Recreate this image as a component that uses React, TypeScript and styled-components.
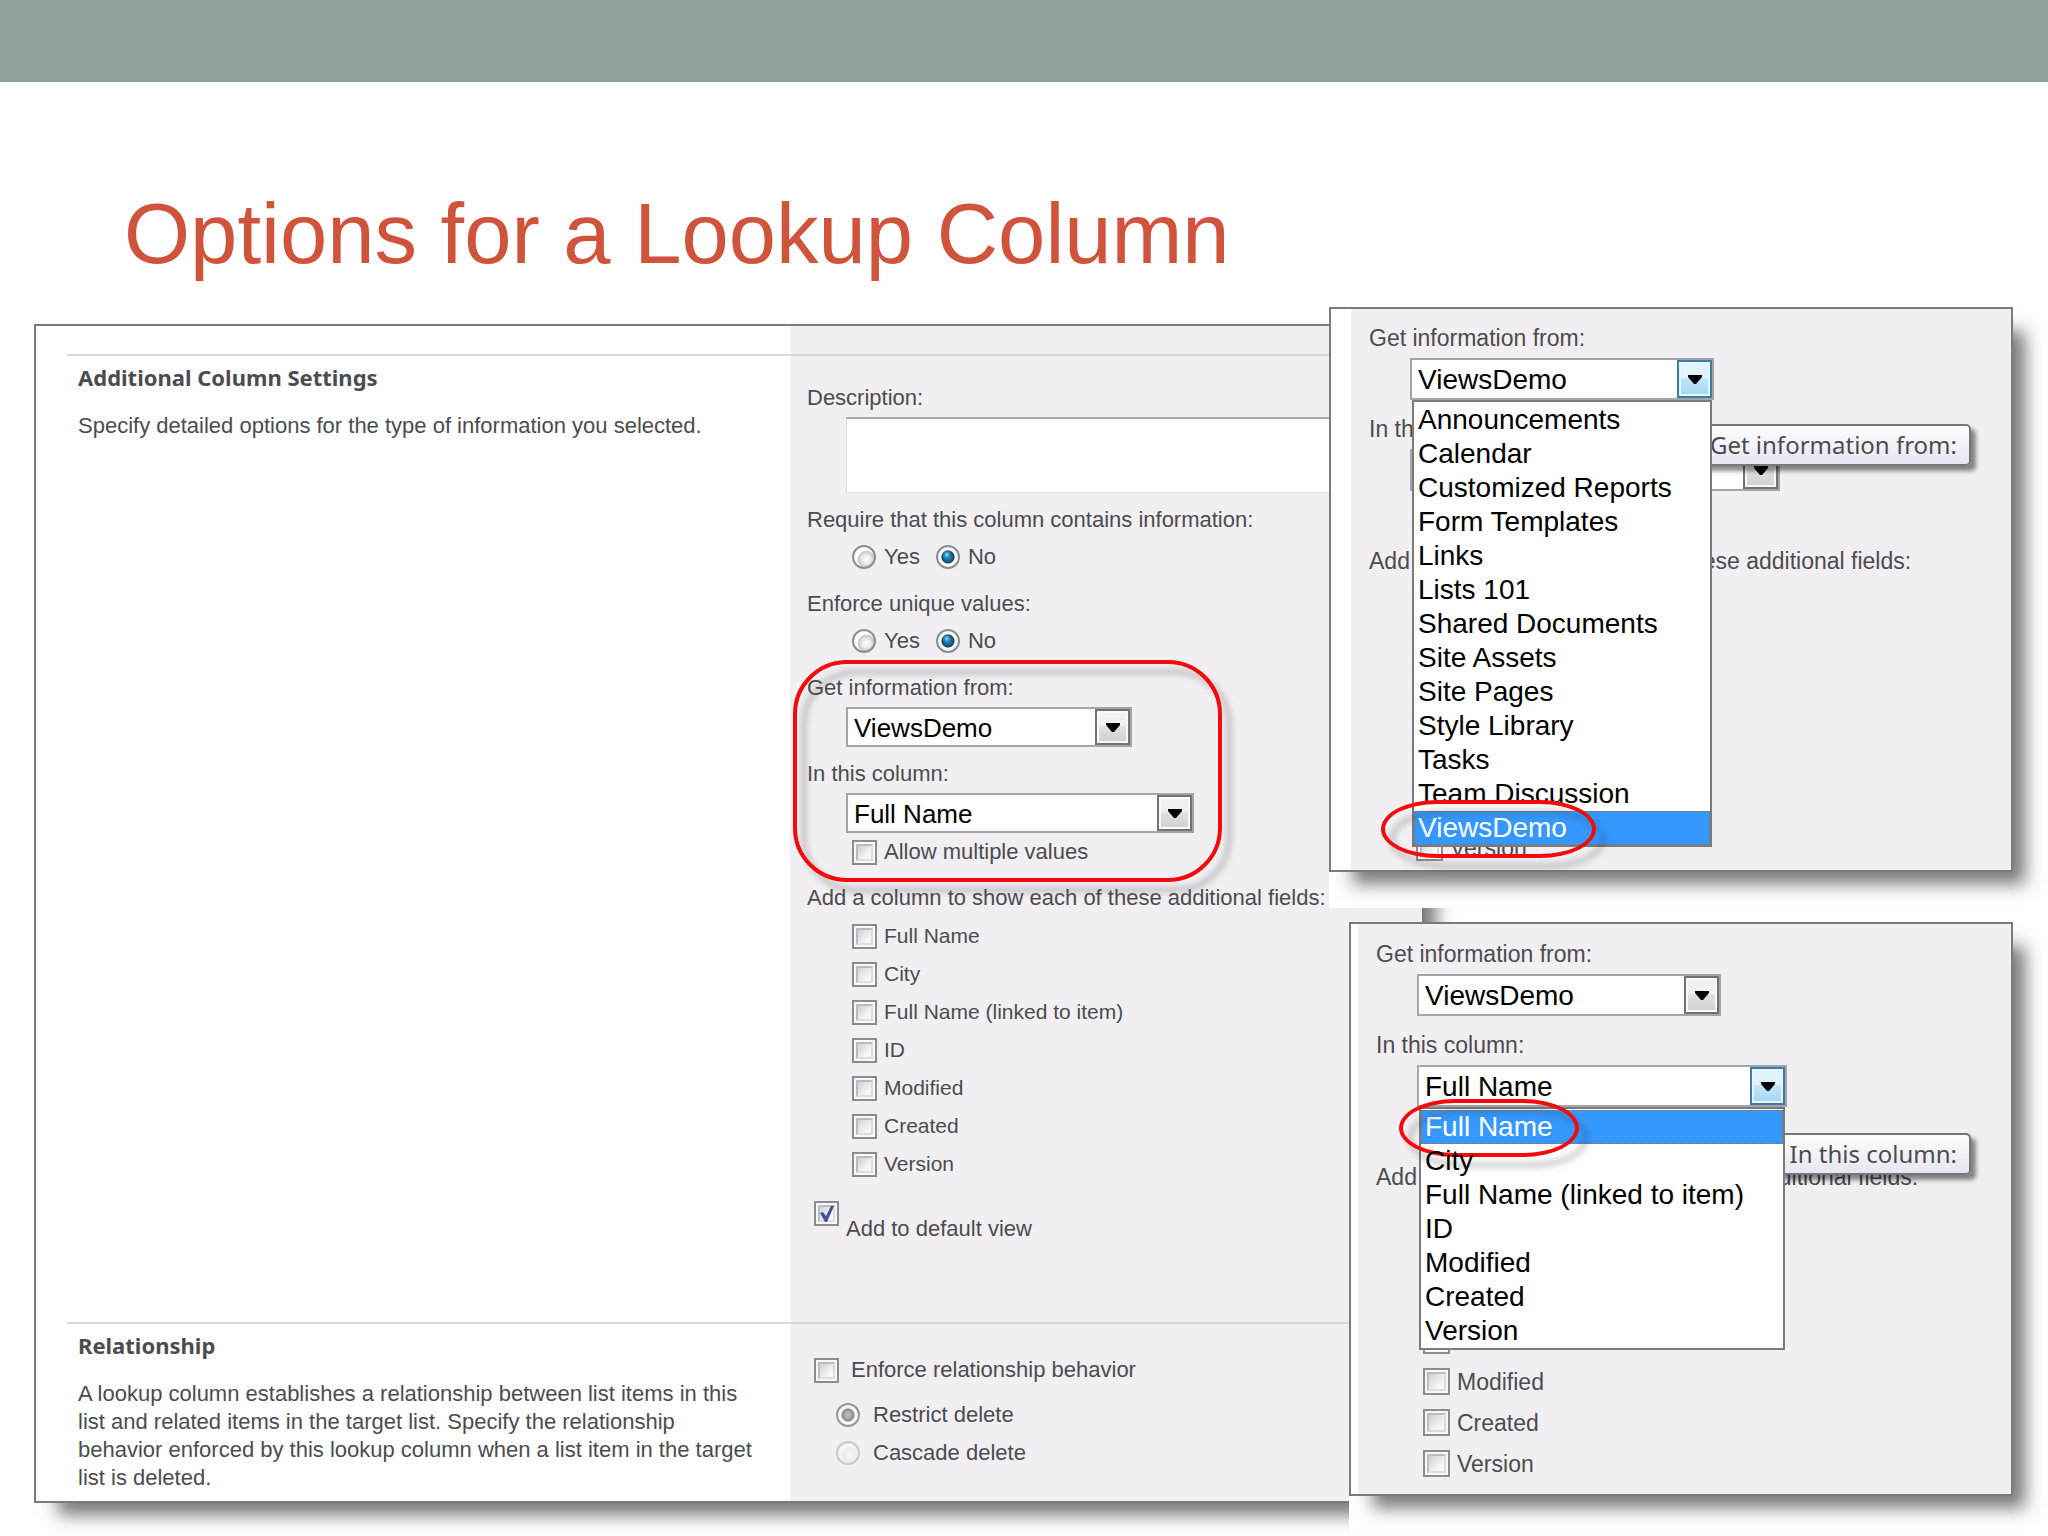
import React, { useId } from "react";
import styled, { createGlobalStyle, css } from "styled-components";

const ink = "#4c4c50";
const panelGrey = "#f1eff2";
const edge = "#7b7b7e";

const GlobalStyle = createGlobalStyle`
  *, *::before, *::after { box-sizing: border-box; }
  body {
    margin: 0;
    background: #fefefe;
    color: ${ink};
    font-family: "Liberation Sans", Arial, sans-serif;
  }
`;

const Slide = styled.main`
  min-height: 100vh;
  display: flex;
  flex-direction: column;
`;

const Band = styled.div`
  height: 82px;
  background: #91a199;
`;

const Title = styled.h1`
  margin: 0;
  padding: 102px 120px 40px 124px;
  color: #d0533c;
  font-size: 85px;
  line-height: 100px;
  font-weight: 400;
`;

const Stage = styled.div`
  position: relative;
  padding: 0 624px 33px 34px;
`;

const castShadow = css`
  box-shadow: 18px 18px 16px -6px rgba(40, 38, 42, 0.62);
`;

const SettingsPanel = styled.form`
  border: 2px solid ${edge};
  padding: 28px 0 0 31px;
  background: linear-gradient(to left, ${panelGrey} 632px, #fefefe 632px);
  ${castShadow}
`;

const Section = styled.section`
  display: grid;
  grid-template-columns: minmax(0, 1fr) 632px;
  border-top: 2px solid #d9d8db;
`;

const Intro = styled.div`
  padding: 7px 12px 9px 11px;
`;

const SectionTitle = styled.h2`
  margin: 0 0 21px;
  font-family: "Noto Sans", "Open Sans", sans-serif;
  font-size: 22px;
  line-height: 28px;
  font-weight: 700;
`;

const Copy = styled.p`
  margin: 0;
  font-size: 22px;
  line-height: 28px;
`;

const Controls = styled.div<{ $top: number; $bottom: number }>`
  padding: ${(p) => p.$top}px 17px ${(p) => p.$bottom}px;
  display: flex;
  flex-direction: column;
  gap: 13px;
  font-size: 22px;
`;

const Field = styled.fieldset<{ $large?: boolean }>`
  margin: 0;
  padding: 0;
  border: 0;
  min-width: 0;
  display: flex;
  flex-direction: column;
  gap: 5px;
  line-height: ${(p) => (p.$large ? 30 : 28)}px;
`;

const FieldName = styled.label`
  white-space: nowrap;
`;

const Indent = styled.div<{ $by?: number }>`
  margin-left: ${(p) => p.$by ?? 39}px;
  display: flex;
  flex-direction: column;
`;

const Description = styled.textarea`
  height: 76px;
  resize: none;
  border: 1px solid #dcdde2;
  border-top: 2px solid #a9a9ad;
  background: #fefefe;
  font: inherit;
`;

const RadioRow = styled.div`
  display: flex;
  gap: 16px;
  height: 30px;
  margin: 3px 0 5px 45px;
`;

const Choice = styled.label<{ $height?: number; $gap?: number; $size?: number; $font?: number }>`
  display: flex;
  align-items: center;
  gap: ${(p) => p.$gap ?? 7}px;
  height: ${(p) => p.$height ?? 38}px;
  font-size: ${(p) => p.$font ?? 22}px;
  --tick: ${(p) => p.$size ?? 25}px;
`;

const RadioInput = styled.input`
  appearance: none;
  margin: 0;
  width: 24px;
  height: 24px;
  border: 2px solid #8b8e91;
  border-radius: 50%;
  background: radial-gradient(circle at 62% 62%, #fff 0, #e4e5e7 5px, #c4c7ca 8px, #fafafa 9px);

  &:checked {
    background:
      radial-gradient(circle at 44% 38%, #7fdcfb 0, rgba(42, 154, 208, 0.6) 3px, transparent 5px),
      radial-gradient(circle, #2383b8 0, #1b6391 4px, #17405f 6px, #f7f7f7 7px);
  }
  &:disabled {
    border-color: #c9cacc;
    background: radial-gradient(circle at 60% 60%, #f7f7f7 0, #ececee 7px, #f5f5f5 9px);
  }
  &:disabled:checked {
    border-color: #97989b;
    background: radial-gradient(circle, #c4c4c6 0, #a3a3a6 4px, #88888b 6px, #f5f5f5 7px);
  }
`;

const TickBox = styled.span`
  display: grid;
  flex: none;
  width: var(--tick);
  height: var(--tick);
  > * { grid-area: 1 / 1; }
`;

const TickInput = styled.input`
  appearance: none;
  margin: 0;
  padding: 2px;
  border: 2px solid #8b8c8f;
  background: #f8f8f8;

  &::before {
    content: "";
    display: block;
    height: 100%;
    border: 2px solid #b9bcc1;
    border-right-color: #dcdde0;
    border-bottom-color: #dcdde0;
    background: linear-gradient(135deg, #cfd2d6, #f8f8f8 80%);
  }
`;

const TickMark = styled.svg`
  width: 100%;
  height: 100%;
  pointer-events: none;
`;

const DefaultView = styled.label`
  display: flex;
  gap: 7px;
  margin: 5px 0 0 7px;
  line-height: 28px;
  --tick: 25px;
  span:last-child { padding-top: 14px; }
`;

const Combo = styled.div<{ $width: number; $height: number; $font: number }>`
  position: relative;
  display: grid;
  grid-template-rows: ${(p) => p.$height}px;
  width: ${(p) => p.$width}px;
  font-size: ${(p) => p.$font}px;
  > select, > span { grid-area: 1 / 1; }
`;

const Select = styled.select`
  appearance: none;
  width: 100%;
  border: 2px solid #a5a5a9;
  border-radius: 0;
  padding: 2px 40px 0 6px;
  background: #fefefe;
  color: #000;
  font: inherit;
`;

const DropButton = styled.span<{ $hot?: boolean }>`
  justify-self: end;
  width: 35px;
  margin: 2px;
  display: grid;
  place-items: center;
  pointer-events: none;
  border: 2px solid ${(p) => (p.$hot ? "#3d7ba6" : "#727276")};
  box-shadow: inset 0 0 0 2px ${(p) => (p.$hot ? "#e6f6fd" : "#f9f9f9")};
  background: ${(p) =>
    p.$hot
      ? "linear-gradient(#e3f3fc 45%, #bfe4f8 50%, #a4d8f3)"
      : "linear-gradient(#f1f1f2 45%, #e0e0e2 50%, #d0d0d3)"};
`;

const OptionList = styled.ul`
  position: absolute;
  z-index: 3;
  top: 100%;
  left: 2px;
  right: 2px;
  margin: 0;
  padding: 1px 0 0;
  list-style: none;
  border: 2px solid ${edge};
  background: #fefefe;
  color: #000;
  line-height: 34px;
`;

const Option = styled.li<{ $active?: boolean }>`
  position: relative;
  height: 34px;
  padding-left: 4px;
  white-space: nowrap;
  ${(p) =>
    p.$active &&
    css`
      background: #3498ff;
      color: #fff;
      outline: 1px dotted #a06a3c;
      outline-offset: -1px;
    `}
`;

const Circled = styled.div`
  position: relative;
  display: flex;
  flex-direction: column;
  gap: 13px;
`;

const ring = css`
  position: absolute;
  pointer-events: none;
  border: 4px solid #f40a0a;
  filter: drop-shadow(9px 10px 3px rgba(60, 60, 60, 0.35));
`;

const FieldRing = styled.div`
  ${ring}
  inset: -14px auto -11px -14px;
  width: 429px;
  border-radius: 54px;
`;

const OptionRing = styled.span<{ $width: number; $left: number }>`
  ${ring}
  top: -11px;
  left: ${(p) => p.$left}px;
  width: ${(p) => p.$width}px;
  height: 58px;
  border-radius: 56px / 50%;
`;

const Overlays = styled.aside`
  position: absolute;
  top: -17px;
  right: 0;
  display: flex;
  flex-direction: column;
  align-items: flex-end;
  gap: 14px;
`;

const Sheet = styled.div`
  padding: 0 35px 36px 0;
  background: #fefefe;
`;

const Popup = styled.form<{ $width: number; $strip: number; $top: number; $bottom: number }>`
  position: relative;
  width: ${(p) => p.$width}px;
  border: 2px solid ${edge};
  padding: ${(p) => p.$top}px 18px ${(p) => p.$bottom}px ${(p) => p.$strip + 18}px;
  background: linear-gradient(to right, #fefefe ${(p) => p.$strip}px, ${panelGrey} ${(p) => p.$strip}px);
  display: flex;
  flex-direction: column;
  gap: 14px;
  font-size: 23px;
  ${castShadow}
`;

const Tooltip = styled.div<{ $top: number }>`
  position: absolute;
  z-index: 2;
  top: ${(p) => p.$top}px;
  right: 40px;
  height: 42px;
  padding: 0 12px;
  border: 2px solid #77777a;
  border-radius: 5px;
  background: linear-gradient(#fefefe, #e5e6f1);
  box-shadow: 5px 5px 4px rgba(0, 0, 0, 0.45);
  font-family: "Noto Sans", "Open Sans", sans-serif;
  font-size: 24px;
  line-height: 38px;
  white-space: nowrap;
`;

function Arrow() {
  return (
    <svg width="14" height="9" viewBox="0 0 14 9" aria-hidden="true">
      <path d="M0 0h14v2L8 9H6L0 2z" fill="#000" />
    </svg>
  );
}

type TickProps = { label: string; height?: number; gap?: number; size?: number; font?: number };

function Tick({ label, height, gap, size, font }: TickProps) {
  return (
    <Choice $height={height} $gap={gap} $size={size} $font={font}>
      <TickBox>
        <TickInput type="checkbox" />
      </TickBox>
      <span>{label}</span>
    </Choice>
  );
}

function YesNo({ legend, name }: { legend: string; name: string }) {
  return (
    <Field role="radiogroup" aria-label={legend}>
      <FieldName as="span">{legend}</FieldName>
      <RadioRow>
        <Choice $height={30} $gap={8}>
          <RadioInput type="radio" name={name} />
          Yes
        </Choice>
        <Choice $height={30} $gap={8}>
          <RadioInput type="radio" name={name} defaultChecked />
          No
        </Choice>
      </RadioRow>
    </Field>
  );
}

type DropProps = {
  label: string;
  value: string;
  width: number;
  large?: boolean;
  open?: string[];
  ringLeft?: number;
  ringWidth?: number;
  children?: React.ReactNode;
};

function DropField({ label, value, width, large, open, ringLeft = 0, ringWidth = 0, children }: DropProps) {
  const id = useId();
  return (
    <Field $large={large}>
      <FieldName htmlFor={id}>{label}</FieldName>
      <Indent $by={large ? 41 : 39}>
        <Combo $width={width} $height={large ? 42 : 40} $font={large ? 28 : 26}>
          <Select id={id} defaultValue={value}>
            {(open ?? [value]).map((o) => (
              <option key={o}>{o}</option>
            ))}
          </Select>
          <DropButton $hot={!!open}>
            <Arrow />
          </DropButton>
          {open && (
            <OptionList role="listbox" aria-label={label}>
              {open.map((o) => (
                <Option key={o} role="option" aria-selected={o === value} $active={o === value}>
                  {o}
                  {o === value && <OptionRing $left={ringLeft} $width={ringWidth} />}
                </Option>
              ))}
            </OptionList>
          )}
        </Combo>
        {children}
      </Indent>
    </Field>
  );
}

const lists = [
  "Announcements",
  "Calendar",
  "Customized Reports",
  "Form Templates",
  "Links",
  "Lists 101",
  "Shared Documents",
  "Site Assets",
  "Site Pages",
  "Style Library",
  "Tasks",
  "Team Discussion",
  "ViewsDemo",
];

const columns = ["Full Name", "City", "Full Name (linked to item)", "ID", "Modified", "Created", "Version"];

function ExtraFields({ large }: { large?: boolean }) {
  const legend = "Add a column to show each of these additional fields:";
  return (
    <Field $large={large} role="group" aria-label={legend}>
      <FieldName as="span">{legend}</FieldName>
      <Indent $by={large ? 47 : 45}>
        {columns.map((c) => (
          <Tick key={c} label={c} height={large ? 41 : 38} size={large ? 27 : 25} font={large ? 23 : 21} />
        ))}
      </Indent>
    </Field>
  );
}

const AllowRow = styled.div`
  margin-left: 6px;
`;

const Behaviour = styled.div`
  margin-left: 7px;
`;

const Deletes = styled.div`
  margin: 7px 0 0 22px;
`;

export default function App() {
  return (
    <>
      <GlobalStyle />
      <Slide>
        <Band />
        <Title>Options for a Lookup Column</Title>
        <Stage>
          <SettingsPanel>
            <Section>
              <Intro>
                <SectionTitle>Additional Column Settings</SectionTitle>
                <Copy>Specify detailed options for the type of information you selected.</Copy>
              </Intro>
              <Controls $top={28} $bottom={79}>
                <Field>
                  <FieldName htmlFor="description">Description:</FieldName>
                  <Indent>
                    <Description id="description" />
                  </Indent>
                </Field>
                <YesNo legend="Require that this column contains information:" name="required" />
                <YesNo legend="Enforce unique values:" name="unique" />
                <Circled>
                  <DropField label="Get information from:" value="ViewsDemo" width={286} />
                  <DropField label="In this column:" value="Full Name" width={348}>
                    <AllowRow>
                      <Tick label="Allow multiple values" />
                    </AllowRow>
                  </DropField>
                  <FieldRing />
                </Circled>
                <ExtraFields />
                <DefaultView>
                  <TickBox>
                    <TickInput type="checkbox" defaultChecked />
                    <TickMark viewBox="0 0 25 25" aria-hidden="true">
                      <path d="M6 12l3-1 3 4 5-10h3l-7 16h-2z" fill="#43529b" />
                    </TickMark>
                  </TickBox>
                  <span>Add to default view</span>
                </DefaultView>
              </Controls>
            </Section>
            <Section>
              <Intro>
                <SectionTitle>Relationship</SectionTitle>
                <Copy>
                  A lookup column establishes a relationship between list items in this
                  <br />
                  list and related items in the target list. Specify the relationship
                  <br />
                  behavior enforced by this lookup column when a list item in the target
                  <br />
                  list is deleted.
                </Copy>
              </Intro>
              <Controls $top={27} $bottom={29}>
                <Behaviour>
                  <Tick label="Enforce relationship behavior" gap={12} />
                  <Deletes>
                    <Choice $gap={13}>
                      <RadioInput type="radio" name="delete" defaultChecked disabled />
                      Restrict delete
                    </Choice>
                    <Choice $gap={13}>
                      <RadioInput type="radio" name="delete" disabled />
                      Cascade delete
                    </Choice>
                  </Deletes>
                </Behaviour>
              </Controls>
            </Section>
          </SettingsPanel>

          <Overlays>
            <Sheet>
              <Popup $width={684} $strip={20} $top={14} $bottom={2}>
                <DropField large label="Get information from:" value="ViewsDemo" width={304} open={lists} ringLeft={-33} ringWidth={215} />
                <DropField large label="In this column:" value="Full Name" width={370}>
                  <AllowRow>
                    <Tick label="Allow multiple values" height={41} size={27} />
                  </AllowRow>
                </DropField>
                <ExtraFields large />
                <Tooltip role="tooltip" $top={115}>Get information from:</Tooltip>
              </Popup>
            </Sheet>
            <Sheet>
              <Popup $width={664} $strip={7} $top={15} $bottom={10}>
                <DropField large label="Get information from:" value="ViewsDemo" width={304} />
                <DropField large label="In this column:" value="Full Name" width={370} open={columns} ringLeft={-22} ringWidth={180}>
                  <AllowRow>
                    <Tick label="Allow multiple values" height={41} size={27} />
                  </AllowRow>
                </DropField>
                <ExtraFields large />
                <Tooltip role="tooltip" $top={209}>In this column:</Tooltip>
              </Popup>
            </Sheet>
          </Overlays>
        </Stage>
      </Slide>
    </>
  );
}
